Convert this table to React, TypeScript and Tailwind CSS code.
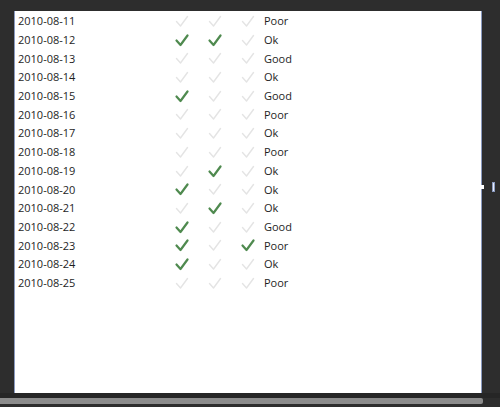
import React from "react";

const rows: [string, boolean, boolean, boolean, string][] = [
  ["2010-08-11", false, false, false, "Poor"],
  ["2010-08-12", true, true, false, "Ok"],
  ["2010-08-13", false, false, false, "Good"],
  ["2010-08-14", false, false, false, "Ok"],
  ["2010-08-15", true, false, false, "Good"],
  ["2010-08-16", false, false, false, "Poor"],
  ["2010-08-17", false, false, false, "Ok"],
  ["2010-08-18", false, false, false, "Poor"],
  ["2010-08-19", false, true, false, "Ok"],
  ["2010-08-20", true, false, false, "Ok"],
  ["2010-08-21", false, true, false, "Ok"],
  ["2010-08-22", true, false, false, "Good"],
  ["2010-08-23", true, false, true, "Poor"],
  ["2010-08-24", true, false, false, "Ok"],
  ["2010-08-25", false, false, false, "Poor"],
];

function Check({ on }: { on: boolean }) {
  return (
    <div className="w-[33px] flex justify-center">
      <svg width="14" height="13" viewBox="0 0 14 13">
        <path
          d="M1.5 6.5 L5.5 11 L12.5 1.5"
          fill="none"
          stroke={on ? "#4f8a4f" : "#e4e4e4"}
          strokeWidth={on ? 2.2 : 1.4}
          strokeLinecap="round"
          strokeLinejoin="round"
        />
      </svg>
    </div>
  );
}

export default function App() {
  return (
    <div
      className="w-[500px] h-[407px] bg-[#2d2d2d] flex flex-col overflow-hidden"
      style={{ fontFamily: '"Open Sans", "Noto Sans", sans-serif' }}
    >
      <div className="h-[11px] shrink-0" />
      <div className="flex h-[382px] shrink-0">
        <div className="w-[14px] shrink-0" />
        <div className="w-[468px] bg-white border-l border-r border-[#8a9ac0] pt-[1px]">
          {rows.map((r) => (
            <div key={r[0]} className="h-[18.72px] flex items-center text-[11px] text-[#1e1e1e]">
              <div className="w-[150px] pl-[3px]">{r[0]}</div>
              <Check on={r[1]} />
              <Check on={r[2]} />
              <Check on={r[3]} />
              <div className="pl-[0px]">{r[4]}</div>
            </div>
          ))}
        </div>
        <div className="relative flex-1">
          <div className="absolute left-[-2px] top-[174px] w-[4px] h-[4px] bg-white" />
          <div className="absolute left-[10px] top-[171px] w-[3px] h-[10px] bg-[#e8ecf8] border border-[#8a9ac0]" />
        </div>
      </div>
      <div className="h-[5px] shrink-0 bg-[#262626]" />
      <div className="h-[6px] w-[483px] shrink-0 bg-[#8c8c8c] rounded-r-[2px]" />
    </div>
  );
}
